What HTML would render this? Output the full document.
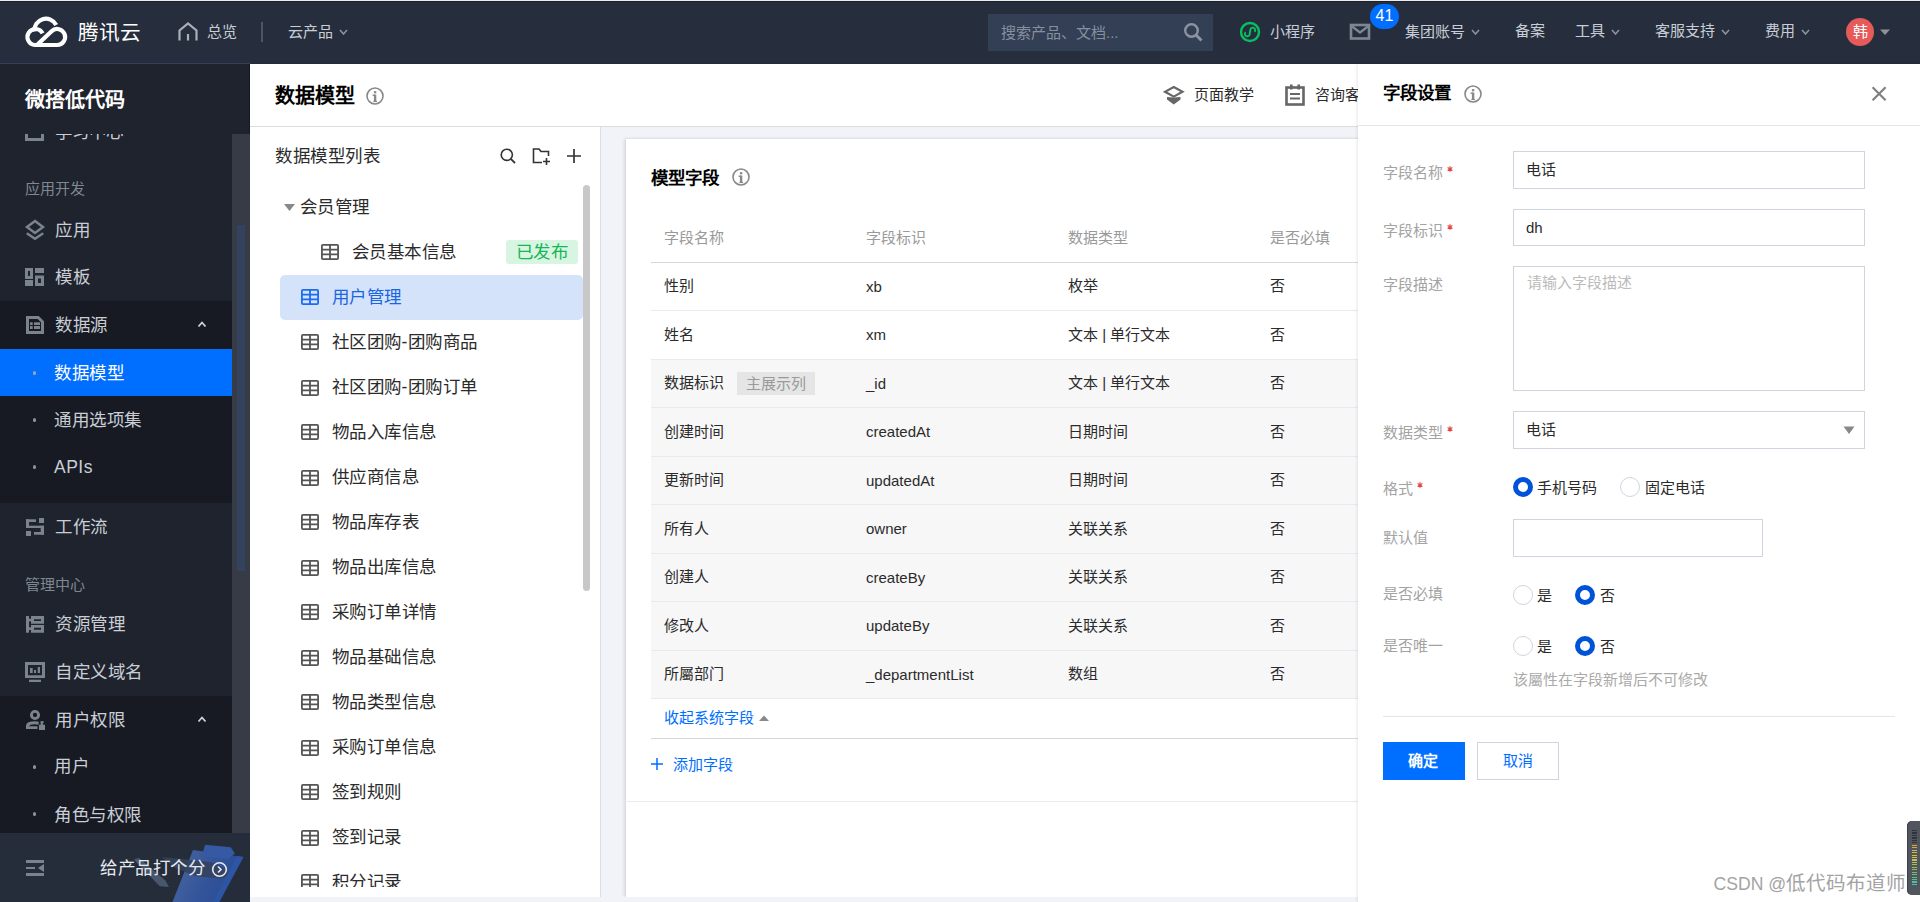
<!DOCTYPE html>
<html lang="zh-CN"><head><meta charset="utf-8"><title>数据模型</title>
<style>
html,body{margin:0;padding:0}
body{width:1920px;height:902px;overflow:hidden;position:relative;background:#fff;font-family:"Liberation Sans",sans-serif}
.t{position:absolute;white-space:nowrap}
.r{position:absolute}
</style></head><body>
<div class="r" style="left:0px;top:0px;width:1920px;height:64px;background:#262e3d;"></div>
<div class="r" style="left:0px;top:0px;width:1920px;height:1px;background:#ececec;"></div>
<div class="r" style="left:0px;top:1px;width:1920px;height:1px;background:#1b2130;"></div>
<div class="r" style="left:0px;top:63px;width:250px;height:1px;background:#33405a;"></div>
<div class="r" style="left:250px;top:63px;width:1670px;height:1px;background:#222c3f;"></div>
<svg class="r" style="left:20px;top:12px;" width="52" height="40" viewBox="0 0 52 40"><g fill="none" stroke="#fff" stroke-width="4.2" stroke-linecap="butt" stroke-linejoin="round"><path d="M22.6 21.4 A8 8 0 1 0 15 33 L37 33 A8 8 0 1 0 31.6 19.2 L17.5 32.6"/><path d="M14.4 19.5 A11.6 11.6 0 0 1 36.2 12.9"/></g></svg>
<div class="t" style="left:78px;top:23.0px;font-size:20.6px;line-height:20px;color:#fff;font-weight:500;letter-spacing:0px">腾讯云</div>
<svg class="r" style="left:177px;top:21px;" width="22" height="21" viewBox="0 0 22 21"><path d="M2.5 19.5 V9.5 L11 2.5 L19.5 9.5 V19.5" fill="none" stroke="#a9b0b8" stroke-width="2.2"/><path d="M11 13 V19.5" stroke="#a9b0b8" stroke-width="2.2"/></svg>
<div class="t" style="left:207px;top:21.5px;font-size:15px;line-height:20px;color:#c9ced6;font-weight:normal;">总览</div>
<div class="r" style="left:261px;top:22px;width:2px;height:20px;background:#4b5563;"></div>
<div class="t" style="left:288px;top:21.5px;font-size:15px;line-height:20px;color:#c9ced6;font-weight:normal;">云产品</div>
<svg class="r" style="left:338.5px;top:28.5px;" width="9" height="6" viewBox="0 0 9 6"><path d="M1 1 L4.5 5 L8 1" fill="none" stroke="#8a929c" stroke-width="1.6"/></svg>
<div class="r" style="left:988px;top:14px;width:225px;height:37px;background:#333f55;"></div>
<div class="t" style="left:1001px;top:22.700000000000003px;font-size:15px;line-height:20px;color:#8691a0;font-weight:normal;">搜索产品、文档...</div>
<svg class="r" style="left:1182px;top:21px;" width="22" height="22" viewBox="0 0 22 22"><circle cx="9.5" cy="9.5" r="6.3" fill="none" stroke="#8a949f" stroke-width="2.4"/><path d="M14 14 L19.5 19.5" stroke="#8a949f" stroke-width="3"/></svg>
<svg class="r" style="left:1239px;top:21px;" width="22" height="22" viewBox="0 0 22 22"><circle cx="11" cy="11" r="9" fill="none" stroke="#07c160" stroke-width="2.4"/><path d="M6.6 11.2 A2.4 2.4 0 1 0 10.7 12.6 L11.4 9.2 A2.4 2.4 0 1 1 15.4 10.8" fill="none" stroke="#07c160" stroke-width="1.9"/></svg>
<div class="t" style="left:1270px;top:22.0px;font-size:15px;line-height:20px;color:#c9ced6;font-weight:normal;">小程序</div>
<svg class="r" style="left:1349px;top:23px;" width="22" height="18" viewBox="0 0 22 18"><rect x="2" y="2" width="18" height="13.5" fill="none" stroke="#7d8792" stroke-width="2.6"/><path d="M2.5 3 L11 9.5 L19.5 3" fill="none" stroke="#7d8792" stroke-width="2.4"/></svg>
<div class="r" style="left:1370px;top:4px;width:29px;height:25px;border-radius:13px;background:#006eff;color:#fff;font-size:16px;line-height:24px;text-align:center">41</div>
<div class="t" style="left:1405px;top:22.0px;font-size:15px;line-height:20px;color:#c9ced6;font-weight:normal;">集团账号</div>
<svg class="r" style="left:1470.5px;top:29px;" width="9" height="6" viewBox="0 0 9 6"><path d="M1 1 L4.5 5 L8 1" fill="none" stroke="#8a929c" stroke-width="1.6"/></svg>
<div class="t" style="left:1515px;top:21.0px;font-size:15px;line-height:20px;color:#c9ced6;font-weight:normal;">备案</div>
<div class="t" style="left:1575px;top:21.0px;font-size:15px;line-height:20px;color:#c9ced6;font-weight:normal;">工具</div>
<svg class="r" style="left:1611px;top:29px;" width="9" height="6" viewBox="0 0 9 6"><path d="M1 1 L4.5 5 L8 1" fill="none" stroke="#8a929c" stroke-width="1.6"/></svg>
<div class="t" style="left:1655px;top:21.0px;font-size:15px;line-height:20px;color:#c9ced6;font-weight:normal;">客服支持</div>
<svg class="r" style="left:1720.5px;top:29px;" width="9" height="6" viewBox="0 0 9 6"><path d="M1 1 L4.5 5 L8 1" fill="none" stroke="#8a929c" stroke-width="1.6"/></svg>
<div class="t" style="left:1765px;top:21.0px;font-size:15px;line-height:20px;color:#c9ced6;font-weight:normal;">费用</div>
<svg class="r" style="left:1800.5px;top:29px;" width="9" height="6" viewBox="0 0 9 6"><path d="M1 1 L4.5 5 L8 1" fill="none" stroke="#8a929c" stroke-width="1.6"/></svg>
<div class="r" style="left:1846px;top:18px;width:28px;height:28px;border-radius:50%;background:#e65a5a;color:#fff;font-size:15px;line-height:28px;text-align:center">韩</div>
<svg class="r" style="left:1879px;top:28px;" width="12" height="8" viewBox="0 0 12 8"><path d="M1 1.5 H11 L6 7 Z" fill="#8f9296"/></svg>
<div class="r" style="left:0px;top:64px;width:250px;height:838px;background:#1f232d;"></div>
<div class="r" style="left:249px;top:64px;width:1px;height:70px;background:#141821;"></div>
<div class="r" style="left:0;top:134px;width:232px;height:699px;overflow:hidden">
</div>
<div class="r" style="left:0px;top:301px;width:232px;height:202px;background:#171a22;"></div>
<div class="r" style="left:0px;top:349px;width:232px;height:47px;background:#006eff;"></div>
<div class="r" style="left:0px;top:696px;width:232px;height:137px;background:#171a22;"></div>
<div class="r" style="left:232px;top:134px;width:18px;height:699px;background:#373b45;"></div>
<div class="r" style="left:237px;top:225px;width:8px;height:346px;background:#33425d;"></div>
<div class="t" style="left:25px;top:90.0px;font-size:20px;line-height:20px;color:#fff;font-weight:bold;">微搭低代码</div>
<div class="r" style="left:0;top:134px;width:232px;height:10px;overflow:hidden">
<div class="t" style="left:25px;top:-12px;width:19px;height:19px;box-sizing:border-box;border:3px solid #7b838d"></div>
<div class="t" style="left:55px;top:-12px;font-size:17.5px;line-height:20px;color:#c9ced6">学习中心</div>
</div>
<div class="t" style="left:25px;top:179.3px;font-size:15px;line-height:20px;color:#7f8791;font-weight:normal;">应用开发</div>
<svg class="r" style="left:20px;top:215px;" width="30" height="30" viewBox="0 0 30 30"><path d="M15 6 L23 12 L15 18 L7 12 Z" fill="none" stroke="#7b838d" stroke-width="2.5" stroke-linejoin="miter"/><path d="M6.8 18.3 L15 23.8 L23.2 18.3" fill="none" stroke="#7b838d" stroke-width="2.5"/></svg>
<div class="t" style="left:55px;top:220.3px;font-size:17.5px;line-height:20px;color:#c9ced6;font-weight:normal;letter-spacing:0.5px;">应用</div>
<svg class="r" style="left:25px;top:268px;" width="19" height="18" viewBox="0 0 19 18"><rect x="1.5" y="1.5" width="5" height="8" fill="none" stroke="#7b838d" stroke-width="3"/><rect x="10" y="0" width="9" height="5" fill="#7b838d"/><rect x="0" y="12" width="8" height="6" fill="#7b838d"/><rect x="11.5" y="9" width="6" height="7.5" fill="none" stroke="#7b838d" stroke-width="3"/></svg>
<div class="t" style="left:55px;top:266.8px;font-size:17.5px;line-height:20px;color:#c9ced6;font-weight:normal;letter-spacing:0.5px;">模板</div>
<svg class="r" style="left:20px;top:310px;" width="30" height="30" viewBox="0 0 30 30"><path d="M7.5 7.5 H18.2 L22.5 11.8 V22.5 H7.5 Z" fill="none" stroke="#7b838d" stroke-width="3"/><rect x="10" y="12.3" width="2.7" height="2.7" fill="#7b838d"/><rect x="14" y="12.3" width="6" height="2.7" fill="#7b838d"/><rect x="10" y="16" width="2.7" height="3" fill="#7b838d"/><rect x="14" y="16" width="6" height="3" fill="#7b838d"/></svg>
<div class="t" style="left:55px;top:315.1px;font-size:17.5px;line-height:20px;color:#c9ced6;font-weight:normal;letter-spacing:0.5px;">数据源</div>
<svg class="r" style="left:197px;top:320px;" width="10" height="8" viewBox="0 0 10 8"><path d="M1.5 6.5 L5 2.5 L8.5 6.5" fill="none" stroke="#cfd3d9" stroke-width="1.8"/></svg>
<div class="r" style="left:33px;top:370.5px;width:3px;height:4px;background:#9aa6b8;border-radius:1.5px"></div>
<div class="t" style="left:54px;top:362.6px;font-size:17.5px;line-height:20px;color:#fff;font-weight:normal;letter-spacing:0.5px;">数据模型</div>
<div class="r" style="left:33px;top:417.5px;width:3px;height:4px;background:#8b929c;border-radius:1.5px"></div>
<div class="t" style="left:54px;top:409.8px;font-size:17.5px;line-height:20px;color:#c9ced6;font-weight:normal;letter-spacing:0.5px;">通用选项集</div>
<div class="r" style="left:33px;top:464.5px;width:3px;height:4px;background:#8b929c;border-radius:1.5px"></div>
<div class="t" style="left:54px;top:456.8px;font-size:17.5px;line-height:20px;color:#c9ced6;font-weight:normal;letter-spacing:0.5px;">APIs</div>
<svg class="r" style="left:20px;top:510px;" width="30" height="30" viewBox="0 0 30 30"><rect x="6" y="9.3" width="10" height="2.7" fill="#7b838d"/><rect x="6" y="9.3" width="3" height="8.7" fill="#7b838d"/><rect x="6" y="15.7" width="18" height="2.3" fill="#7b838d"/><rect x="20.7" y="15.7" width="3.3" height="9" fill="#7b838d"/><rect x="14" y="22" width="10" height="2.7" fill="#7b838d"/><rect x="19" y="8" width="5" height="5" fill="#7b838d"/><rect x="6" y="21" width="5" height="5" fill="#7b838d"/></svg>
<div class="t" style="left:55px;top:516.8px;font-size:17.5px;line-height:20px;color:#c9ced6;font-weight:normal;letter-spacing:0.5px;">工作流</div>
<div class="t" style="left:25px;top:574.5px;font-size:15px;line-height:20px;color:#7f8791;font-weight:normal;">管理中心</div>
<svg class="r" style="left:20px;top:612px;" width="30" height="30" viewBox="0 0 30 30"><rect x="6" y="4" width="3" height="16.7" fill="#7b838d"/><rect x="9" y="6.7" width="2" height="2.6" fill="#7b838d"/><rect x="9" y="15.3" width="2" height="2.7" fill="#7b838d"/><path d="M11 4 H24 V11.7 H11 Z M14 7.3 V9 H21 V7.3 Z" fill="#7b838d" fill-rule="evenodd"/><path d="M11 13 H24 V20.7 H11 Z M14 15.7 V17.7 H21 V15.7 Z" fill="#7b838d" fill-rule="evenodd"/></svg>
<div class="t" style="left:55px;top:614.3px;font-size:17.5px;line-height:20px;color:#c9ced6;font-weight:normal;letter-spacing:0.5px;">资源管理</div>
<svg class="r" style="left:20px;top:658px;" width="30" height="30" viewBox="0 0 30 30"><path d="M5 4 H25 V20 H5 Z M8 7 V17.3 H22 V7 Z" fill="#7b838d" fill-rule="evenodd"/><rect x="10" y="10" width="2.7" height="5" fill="#7b838d"/><rect x="14" y="12" width="2" height="3" fill="#7b838d"/><rect x="17.7" y="9" width="2.3" height="6" fill="#7b838d"/><rect x="9" y="21.7" width="12" height="2.3" fill="#7b838d"/></svg>
<div class="t" style="left:55px;top:661.8px;font-size:17.5px;line-height:20px;color:#c9ced6;font-weight:normal;letter-spacing:0.5px;">自定义域名</div>
<svg class="r" style="left:20px;top:705px;" width="30" height="30" viewBox="0 0 30 30"><circle cx="15" cy="10" r="3.6" fill="none" stroke="#7b838d" stroke-width="2.9"/><path d="M6 24 V20.5 Q6.5 16.3 15 16.3 Q17.5 16.3 18.7 16.8 V19.8 Q17 19.3 15 19.3 Q9.5 19.3 9 21.3 H17.5 V24 Z" fill="#7b838d"/><rect x="19" y="19.7" width="6" height="5.3" fill="#7b838d"/><rect x="20.7" y="16.3" width="2.2" height="4" fill="#7b838d"/><rect x="20.7" y="16.3" width="3" height="1.6" fill="#7b838d"/></svg>
<div class="t" style="left:55px;top:709.5999999999999px;font-size:17.5px;line-height:20px;color:#c9ced6;font-weight:normal;letter-spacing:0.5px;">用户权限</div>
<svg class="r" style="left:197px;top:715px;" width="10" height="8" viewBox="0 0 10 8"><path d="M1.5 6.5 L5 2.5 L8.5 6.5" fill="none" stroke="#cfd3d9" stroke-width="1.8"/></svg>
<div class="r" style="left:33px;top:765px;width:3px;height:4px;background:#8b929c;border-radius:1.5px"></div>
<div class="t" style="left:54px;top:756.3px;font-size:17.5px;line-height:20px;color:#c9ced6;font-weight:normal;letter-spacing:0.5px;">用户</div>
<div class="r" style="left:33px;top:812px;width:3px;height:4px;background:#8b929c;border-radius:1.5px"></div>
<div class="t" style="left:54px;top:804.5px;font-size:17.5px;line-height:20px;color:#c9ced6;font-weight:normal;letter-spacing:0.5px;">角色与权限</div>
<div class="r" style="left:0px;top:833px;width:250px;height:69px;background:#252d3b;"></div>
<svg class="r" style="left:125px;top:838px;" width="125" height="64" viewBox="0 0 125 64"><defs><linearGradient id="bd" x1="0" y1="0" x2="1" y2="0.3"><stop offset="0" stop-color="#4a67a0"/><stop offset="0.6" stop-color="#33549a"/><stop offset="1" stop-color="#2a4c92"/></linearGradient></defs><path d="M9.2 21.3 L14.2 19.9 L40.4 42.6 L44 48.9 L34.8 48.2 L10.6 23.4 Z" fill="#48566e"/><path d="M68 12 L118.4 19.1 L94.3 64 L47.5 64 Z" fill="url(#bd)"/><path d="M112 18 L118.4 19.1 L94.3 64 L88 64 Z" fill="#2c55a6"/><path d="M36.9 19.1 L85 24 Q104 30 102.8 35.5 Q101 40.4 96 40.4 L71 38.3 L49.6 29.8 Z" fill="#34425e" opacity="0.9"/><path d="M80.1 6.7 L105.7 9.2 L109.9 15.6 L102.8 21.3 L76.6 18.4 Z" fill="#3659a3"/></svg>
<svg class="r" style="left:20px;top:852px;" width="30" height="30" viewBox="0 0 30 30"><rect x="6" y="8" width="18" height="3" fill="#7b838d"/><rect x="6" y="15" width="9" height="2" fill="#7b838d"/><path d="M24 12 V20 L18 16 Z" fill="#7b838d"/><rect x="6" y="21" width="18" height="3" fill="#7b838d"/></svg>
<div class="t" style="left:100px;top:857.8px;font-size:17.5px;line-height:20px;color:#e6e9ee;font-weight:normal;letter-spacing:0.5px;">给产品打个分</div>
<svg class="r" style="left:211px;top:861px;" width="17" height="17" viewBox="0 0 17 17"><circle cx="8.5" cy="8.5" r="6.8" fill="none" stroke="#e6e9ee" stroke-width="1.6"/><path d="M7 5.5 L10 8.5 L7 11.5" fill="none" stroke="#e6e9ee" stroke-width="1.6"/></svg>
<div class="r" style="left:250px;top:64px;width:1108px;height:62px;background:#fff;"></div>
<div class="r" style="left:250px;top:126px;width:1108px;height:1px;background:#dcdcdc;"></div>
<div class="t" style="left:275px;top:86.0px;font-size:20px;line-height:20px;color:#000;font-weight:bold;">数据模型</div>
<svg class="r" style="left:366px;top:87px;" width="18" height="18" viewBox="0 0 18 18"><circle cx="9.0" cy="9.0" r="8.0" fill="none" stroke="#888" stroke-width="1.6"/><rect x="7.9" y="7.56" width="2.4" height="6.66" fill="#888"/><rect x="7.9" y="4.140000000000001" width="2.4" height="2.2" fill="#888"/><rect x="6.6" y="7.56" width="2.4" height="1.4" fill="#888"/><rect x="7.4" y="13.86" width="3.6" height="1.2" fill="#888"/></svg>
<svg class="r" style="left:1163px;top:85px;" width="22" height="20" viewBox="0 0 22 20"><path d="M10.75 2 L19.5 6.8 L10.75 11.6 L2 6.8 Z" fill="none" stroke="#666" stroke-width="2.2"/><path d="M4 12 L10.75 12.6 L17.5 12 V14.6 L10.75 19.4 L4 14.6 Z" fill="#666"/></svg>
<div class="t" style="left:1194px;top:84.5px;font-size:15px;line-height:20px;color:#2b2b2b;font-weight:normal;">页面教学</div>
<svg class="r" style="left:1285px;top:84px;" width="20" height="22" viewBox="0 0 20 22"><rect x="1.5" y="3.5" width="17" height="17" fill="none" stroke="#666" stroke-width="2.6"/><rect x="5" y="0.5" width="2.6" height="5" fill="#666"/><rect x="12.4" y="0.5" width="2.6" height="5" fill="#666"/><rect x="5" y="9" width="10" height="2" fill="#666"/><rect x="5" y="13.5" width="10" height="2" fill="#666"/></svg>
<div class="t" style="left:1315px;top:84.5px;font-size:15px;line-height:20px;color:#2b2b2b;font-weight:normal;">咨询客服</div>
<div class="r" style="left:250px;top:127px;width:350px;height:770px;background:#fff;"></div>
<div class="r" style="left:600px;top:127px;width:1px;height:770px;background:#d8dde6;"></div>
<div class="r" style="left:250px;top:897px;width:351px;height:5px;background:#f2f3f7;"></div>
<div class="t" style="left:275px;top:146.3px;font-size:17.5px;line-height:20px;color:#2b2b2b;font-weight:normal;letter-spacing:0.5px;">数据模型列表</div>
<svg class="r" style="left:499px;top:147px;" width="18" height="18" viewBox="0 0 18 18"><circle cx="7.8" cy="7.8" r="5.6" fill="none" stroke="#333" stroke-width="1.6"/><path d="M11.8 11.8 L16 16" stroke="#333" stroke-width="1.8"/></svg>
<svg class="r" style="left:532px;top:147px;" width="19" height="19" viewBox="0 0 19 19"><path d="M10 15.5 H1.5 V2 H7 L9 4.5 H16.5 V9" fill="none" stroke="#333" stroke-width="1.6"/><path d="M14.5 11 V18 M11 14.5 H18" stroke="#333" stroke-width="1.6"/></svg>
<svg class="r" style="left:566px;top:148px;" width="16" height="16" viewBox="0 0 16 16"><path d="M8 1 V15 M1 8 H15" stroke="#333" stroke-width="1.7"/></svg>
<div class="r" style="left:250px;top:185px;width:350px;height:702px;overflow:hidden">
<svg class="r" style="left:34px;top:19px" width="11" height="7"><path d="M0 0 H11 L5.5 7 Z" fill="#888"/></svg>
<div class="t" style="left:50px;top:11.800000000000011px;font-size:17.5px;line-height:20px;color:#2b2b2b;letter-spacing:0.4px">会员管理</div>
<svg class="r" style="left:71px;top:59px" width="18" height="16" viewBox="0 0 18 16"><rect x="0.9" y="0.9" width="16.2" height="14.2" rx="1" fill="none" stroke="#555" stroke-width="1.8"/><path d="M1 5.6 H17 M1 10.4 H17 M9 1 V15" stroke="#555" stroke-width="1.8"/></svg>
<div class="t" style="left:102px;top:57.099999999999994px;font-size:17.5px;line-height:20px;color:#2b2b2b;letter-spacing:0.4px">会员基本信息</div>
<div class="r" style="left:256px;top:55px;width:72px;height:24px;border-radius:3px;background:#d8f5e2"></div>
<div class="t" style="left:266px;top:57.30000000000001px;font-size:17.5px;line-height:20px;color:#16b556;letter-spacing:0.4px">已发布</div>
<div class="r" style="left:30px;top:90px;width:303px;height:45px;border-radius:5px;background:#d5e3fa"></div>
<svg class="r" style="left:51px;top:104px" width="18" height="16" viewBox="0 0 18 16"><rect x="0.9" y="0.9" width="16.2" height="14.2" rx="1" fill="none" stroke="#1d6bef" stroke-width="1.8"/><path d="M1 5.6 H17 M1 10.4 H17 M9 1 V15" stroke="#1d6bef" stroke-width="1.8"/></svg>
<div class="t" style="left:82px;top:102.0px;font-size:17.5px;line-height:20px;color:#1a66e0;letter-spacing:0.4px">用户管理</div>
<svg class="r" style="left:51px;top:149px" width="18" height="16" viewBox="0 0 18 16"><rect x="0.9" y="0.9" width="16.2" height="14.2" rx="1" fill="none" stroke="#555" stroke-width="1.8"/><path d="M1 5.6 H17 M1 10.4 H17 M9 1 V15" stroke="#555" stroke-width="1.8"/></svg>
<div class="t" style="left:82px;top:147.3px;font-size:17.5px;line-height:20px;color:#2b2b2b;letter-spacing:0.4px">社区团购-团购商品</div>
<svg class="r" style="left:51px;top:195px" width="18" height="16" viewBox="0 0 18 16"><rect x="0.9" y="0.9" width="16.2" height="14.2" rx="1" fill="none" stroke="#555" stroke-width="1.8"/><path d="M1 5.6 H17 M1 10.4 H17 M9 1 V15" stroke="#555" stroke-width="1.8"/></svg>
<div class="t" style="left:82px;top:192.3px;font-size:17.5px;line-height:20px;color:#2b2b2b;letter-spacing:0.4px">社区团购-团购订单</div>
<svg class="r" style="left:51px;top:239px" width="18" height="16" viewBox="0 0 18 16"><rect x="0.9" y="0.9" width="16.2" height="14.2" rx="1" fill="none" stroke="#555" stroke-width="1.8"/><path d="M1 5.6 H17 M1 10.4 H17 M9 1 V15" stroke="#555" stroke-width="1.8"/></svg>
<div class="t" style="left:82px;top:237.3px;font-size:17.5px;line-height:20px;color:#2b2b2b;letter-spacing:0.4px">物品入库信息</div>
<svg class="r" style="left:51px;top:285px" width="18" height="16" viewBox="0 0 18 16"><rect x="0.9" y="0.9" width="16.2" height="14.2" rx="1" fill="none" stroke="#555" stroke-width="1.8"/><path d="M1 5.6 H17 M1 10.4 H17 M9 1 V15" stroke="#555" stroke-width="1.8"/></svg>
<div class="t" style="left:82px;top:282.3px;font-size:17.5px;line-height:20px;color:#2b2b2b;letter-spacing:0.4px">供应商信息</div>
<svg class="r" style="left:51px;top:329px" width="18" height="16" viewBox="0 0 18 16"><rect x="0.9" y="0.9" width="16.2" height="14.2" rx="1" fill="none" stroke="#555" stroke-width="1.8"/><path d="M1 5.6 H17 M1 10.4 H17 M9 1 V15" stroke="#555" stroke-width="1.8"/></svg>
<div class="t" style="left:82px;top:327.29999999999995px;font-size:17.5px;line-height:20px;color:#2b2b2b;letter-spacing:0.4px">物品库存表</div>
<svg class="r" style="left:51px;top:375px" width="18" height="16" viewBox="0 0 18 16"><rect x="0.9" y="0.9" width="16.2" height="14.2" rx="1" fill="none" stroke="#555" stroke-width="1.8"/><path d="M1 5.6 H17 M1 10.4 H17 M9 1 V15" stroke="#555" stroke-width="1.8"/></svg>
<div class="t" style="left:82px;top:372.29999999999995px;font-size:17.5px;line-height:20px;color:#2b2b2b;letter-spacing:0.4px">物品出库信息</div>
<svg class="r" style="left:51px;top:419px" width="18" height="16" viewBox="0 0 18 16"><rect x="0.9" y="0.9" width="16.2" height="14.2" rx="1" fill="none" stroke="#555" stroke-width="1.8"/><path d="M1 5.6 H17 M1 10.4 H17 M9 1 V15" stroke="#555" stroke-width="1.8"/></svg>
<div class="t" style="left:82px;top:417.29999999999995px;font-size:17.5px;line-height:20px;color:#2b2b2b;letter-spacing:0.4px">采购订单详情</div>
<svg class="r" style="left:51px;top:465px" width="18" height="16" viewBox="0 0 18 16"><rect x="0.9" y="0.9" width="16.2" height="14.2" rx="1" fill="none" stroke="#555" stroke-width="1.8"/><path d="M1 5.6 H17 M1 10.4 H17 M9 1 V15" stroke="#555" stroke-width="1.8"/></svg>
<div class="t" style="left:82px;top:462.29999999999995px;font-size:17.5px;line-height:20px;color:#2b2b2b;letter-spacing:0.4px">物品基础信息</div>
<svg class="r" style="left:51px;top:509px" width="18" height="16" viewBox="0 0 18 16"><rect x="0.9" y="0.9" width="16.2" height="14.2" rx="1" fill="none" stroke="#555" stroke-width="1.8"/><path d="M1 5.6 H17 M1 10.4 H17 M9 1 V15" stroke="#555" stroke-width="1.8"/></svg>
<div class="t" style="left:82px;top:507.29999999999995px;font-size:17.5px;line-height:20px;color:#2b2b2b;letter-spacing:0.4px">物品类型信息</div>
<svg class="r" style="left:51px;top:555px" width="18" height="16" viewBox="0 0 18 16"><rect x="0.9" y="0.9" width="16.2" height="14.2" rx="1" fill="none" stroke="#555" stroke-width="1.8"/><path d="M1 5.6 H17 M1 10.4 H17 M9 1 V15" stroke="#555" stroke-width="1.8"/></svg>
<div class="t" style="left:82px;top:552.3px;font-size:17.5px;line-height:20px;color:#2b2b2b;letter-spacing:0.4px">采购订单信息</div>
<svg class="r" style="left:51px;top:599px" width="18" height="16" viewBox="0 0 18 16"><rect x="0.9" y="0.9" width="16.2" height="14.2" rx="1" fill="none" stroke="#555" stroke-width="1.8"/><path d="M1 5.6 H17 M1 10.4 H17 M9 1 V15" stroke="#555" stroke-width="1.8"/></svg>
<div class="t" style="left:82px;top:597.3px;font-size:17.5px;line-height:20px;color:#2b2b2b;letter-spacing:0.4px">签到规则</div>
<svg class="r" style="left:51px;top:645px" width="18" height="16" viewBox="0 0 18 16"><rect x="0.9" y="0.9" width="16.2" height="14.2" rx="1" fill="none" stroke="#555" stroke-width="1.8"/><path d="M1 5.6 H17 M1 10.4 H17 M9 1 V15" stroke="#555" stroke-width="1.8"/></svg>
<div class="t" style="left:82px;top:642.3px;font-size:17.5px;line-height:20px;color:#2b2b2b;letter-spacing:0.4px">签到记录</div>
<svg class="r" style="left:51px;top:689px" width="18" height="16" viewBox="0 0 18 16"><rect x="0.9" y="0.9" width="16.2" height="14.2" rx="1" fill="none" stroke="#555" stroke-width="1.8"/><path d="M1 5.6 H17 M1 10.4 H17 M9 1 V15" stroke="#555" stroke-width="1.8"/></svg>
<div class="t" style="left:82px;top:687.3px;font-size:17.5px;line-height:20px;color:#2b2b2b;letter-spacing:0.4px">积分记录</div>
</div>
<div class="r" style="left:583px;top:185px;width:7px;height:406px;background:#c8c8c8;border-radius:4px"></div>
<div class="r" style="left:601px;top:127px;width:757px;height:775px;background:#f2f3f8;"></div>
<div class="r" style="left:626px;top:139px;width:760px;height:758px;background:#fff;box-shadow:-2px 0 3px rgba(30,40,60,0.12),0 -1px 2px rgba(30,40,60,0.04)"></div>
<div class="r" style="left:601px;top:897px;width:757px;height:5px;background:#f2f3f8;"></div>
<div class="t" style="left:651px;top:168.3px;font-size:17.5px;line-height:20px;color:#000;font-weight:bold;">模型字段</div>
<svg class="r" style="left:732px;top:168px;" width="18" height="18" viewBox="0 0 18 18"><circle cx="9.0" cy="9.0" r="8.0" fill="none" stroke="#888" stroke-width="1.6"/><rect x="7.9" y="7.56" width="2.4" height="6.66" fill="#888"/><rect x="7.9" y="4.140000000000001" width="2.4" height="2.2" fill="#888"/><rect x="6.6" y="7.56" width="2.4" height="1.4" fill="#888"/><rect x="7.4" y="13.86" width="3.6" height="1.2" fill="#888"/></svg>
<div class="t" style="left:664px;top:227.5px;font-size:15px;line-height:20px;color:#999;font-weight:normal;">字段名称</div>
<div class="t" style="left:866px;top:227.5px;font-size:15px;line-height:20px;color:#999;font-weight:normal;">字段标识</div>
<div class="t" style="left:1068px;top:227.5px;font-size:15px;line-height:20px;color:#999;font-weight:normal;">数据类型</div>
<div class="t" style="left:1270px;top:227.5px;font-size:15px;line-height:20px;color:#999;font-weight:normal;">是否必填</div>
<div class="r" style="left:651px;top:262px;width:707px;height:1px;background:#d4d9e1;"></div>
<div class="r" style="left:651px;top:310px;width:707px;height:1px;background:#e7eaef;"></div>
<div class="t" style="left:664px;top:276.0px;font-size:15px;line-height:20px;color:#2b2b2b;font-weight:normal;">性别</div>
<div class="t" style="left:866px;top:276.5px;font-size:15px;line-height:20px;color:#2b2b2b;font-weight:normal;">xb</div>
<div class="t" style="left:1068px;top:276.0px;font-size:15px;line-height:20px;color:#2b2b2b;font-weight:normal;">枚举</div>
<div class="t" style="left:1270px;top:276.0px;font-size:15px;line-height:20px;color:#2b2b2b;font-weight:normal;">否</div>
<div class="r" style="left:651px;top:359px;width:707px;height:1px;background:#e7eaef;"></div>
<div class="t" style="left:664px;top:324.5px;font-size:15px;line-height:20px;color:#2b2b2b;font-weight:normal;">姓名</div>
<div class="t" style="left:866px;top:325.0px;font-size:15px;line-height:20px;color:#2b2b2b;font-weight:normal;">xm</div>
<div class="t" style="left:1068px;top:324.5px;font-size:15px;line-height:20px;color:#2b2b2b;font-weight:normal;">文本 | 单行文本</div>
<div class="t" style="left:1270px;top:324.5px;font-size:15px;line-height:20px;color:#2b2b2b;font-weight:normal;">否</div>
<div class="r" style="left:651px;top:360px;width:707px;height:47px;background:#f7f7f8;"></div>
<div class="r" style="left:651px;top:407px;width:707px;height:1px;background:#e7eaef;"></div>
<div class="t" style="left:664px;top:373.0px;font-size:15px;line-height:20px;color:#2b2b2b;font-weight:normal;">数据标识</div>
<div class="t" style="left:866px;top:373.5px;font-size:15px;line-height:20px;color:#2b2b2b;font-weight:normal;">_id</div>
<div class="t" style="left:1068px;top:373.0px;font-size:15px;line-height:20px;color:#2b2b2b;font-weight:normal;">文本 | 单行文本</div>
<div class="t" style="left:1270px;top:373.0px;font-size:15px;line-height:20px;color:#2b2b2b;font-weight:normal;">否</div>
<div class="r" style="left:651px;top:408px;width:707px;height:48px;background:#f7f7f8;"></div>
<div class="r" style="left:651px;top:456px;width:707px;height:1px;background:#e7eaef;"></div>
<div class="t" style="left:664px;top:421.5px;font-size:15px;line-height:20px;color:#2b2b2b;font-weight:normal;">创建时间</div>
<div class="t" style="left:866px;top:422.0px;font-size:15px;line-height:20px;color:#2b2b2b;font-weight:normal;">createdAt</div>
<div class="t" style="left:1068px;top:421.5px;font-size:15px;line-height:20px;color:#2b2b2b;font-weight:normal;">日期时间</div>
<div class="t" style="left:1270px;top:421.5px;font-size:15px;line-height:20px;color:#2b2b2b;font-weight:normal;">否</div>
<div class="r" style="left:651px;top:457px;width:707px;height:47px;background:#f7f7f8;"></div>
<div class="r" style="left:651px;top:504px;width:707px;height:1px;background:#e7eaef;"></div>
<div class="t" style="left:664px;top:470.0px;font-size:15px;line-height:20px;color:#2b2b2b;font-weight:normal;">更新时间</div>
<div class="t" style="left:866px;top:470.5px;font-size:15px;line-height:20px;color:#2b2b2b;font-weight:normal;">updatedAt</div>
<div class="t" style="left:1068px;top:470.0px;font-size:15px;line-height:20px;color:#2b2b2b;font-weight:normal;">日期时间</div>
<div class="t" style="left:1270px;top:470.0px;font-size:15px;line-height:20px;color:#2b2b2b;font-weight:normal;">否</div>
<div class="r" style="left:651px;top:505px;width:707px;height:48px;background:#f7f7f8;"></div>
<div class="r" style="left:651px;top:553px;width:707px;height:1px;background:#e7eaef;"></div>
<div class="t" style="left:664px;top:518.5px;font-size:15px;line-height:20px;color:#2b2b2b;font-weight:normal;">所有人</div>
<div class="t" style="left:866px;top:519.0px;font-size:15px;line-height:20px;color:#2b2b2b;font-weight:normal;">owner</div>
<div class="t" style="left:1068px;top:518.5px;font-size:15px;line-height:20px;color:#2b2b2b;font-weight:normal;">关联关系</div>
<div class="t" style="left:1270px;top:518.5px;font-size:15px;line-height:20px;color:#2b2b2b;font-weight:normal;">否</div>
<div class="r" style="left:651px;top:554px;width:707px;height:47px;background:#f7f7f8;"></div>
<div class="r" style="left:651px;top:601px;width:707px;height:1px;background:#e7eaef;"></div>
<div class="t" style="left:664px;top:567.0px;font-size:15px;line-height:20px;color:#2b2b2b;font-weight:normal;">创建人</div>
<div class="t" style="left:866px;top:567.5px;font-size:15px;line-height:20px;color:#2b2b2b;font-weight:normal;">createBy</div>
<div class="t" style="left:1068px;top:567.0px;font-size:15px;line-height:20px;color:#2b2b2b;font-weight:normal;">关联关系</div>
<div class="t" style="left:1270px;top:567.0px;font-size:15px;line-height:20px;color:#2b2b2b;font-weight:normal;">否</div>
<div class="r" style="left:651px;top:602px;width:707px;height:48px;background:#f7f7f8;"></div>
<div class="r" style="left:651px;top:650px;width:707px;height:1px;background:#e7eaef;"></div>
<div class="t" style="left:664px;top:615.5px;font-size:15px;line-height:20px;color:#2b2b2b;font-weight:normal;">修改人</div>
<div class="t" style="left:866px;top:616.0px;font-size:15px;line-height:20px;color:#2b2b2b;font-weight:normal;">updateBy</div>
<div class="t" style="left:1068px;top:615.5px;font-size:15px;line-height:20px;color:#2b2b2b;font-weight:normal;">关联关系</div>
<div class="t" style="left:1270px;top:615.5px;font-size:15px;line-height:20px;color:#2b2b2b;font-weight:normal;">否</div>
<div class="r" style="left:651px;top:651px;width:707px;height:47px;background:#f7f7f8;"></div>
<div class="r" style="left:651px;top:698px;width:707px;height:1px;background:#e7eaef;"></div>
<div class="t" style="left:664px;top:664.0px;font-size:15px;line-height:20px;color:#2b2b2b;font-weight:normal;">所屬部门</div>
<div class="t" style="left:866px;top:664.5px;font-size:15px;line-height:20px;color:#2b2b2b;font-weight:normal;">_departmentList</div>
<div class="t" style="left:1068px;top:664.0px;font-size:15px;line-height:20px;color:#2b2b2b;font-weight:normal;">数组</div>
<div class="t" style="left:1270px;top:664.0px;font-size:15px;line-height:20px;color:#2b2b2b;font-weight:normal;">否</div>
<div class="r" style="left:737px;top:372px;width:78px;height:23px;background:#e5e5e5;"></div>
<div class="t" style="left:746px;top:373.5px;font-size:15px;line-height:20px;color:#999;font-weight:normal;">主展示列</div>
<div class="t" style="left:664px;top:708.3px;font-size:15px;line-height:20px;color:#006eff;font-weight:normal;">收起系统字段</div>
<svg class="r" style="left:758px;top:714px;" width="12" height="8" viewBox="0 0 12 8"><path d="M1 7 H11 L6 1.5 Z" fill="#888"/></svg>
<div class="r" style="left:651px;top:738px;width:707px;height:1px;background:#d4d9e1;"></div>
<svg class="r" style="left:651px;top:758px;" width="12" height="12" viewBox="0 0 12 12"><path d="M6 0 V12 M0 6 H12" stroke="#006eff" stroke-width="1.5"/></svg>
<div class="t" style="left:673px;top:754.5px;font-size:15px;line-height:20px;color:#006eff;font-weight:normal;">添加字段</div>
<div class="r" style="left:625px;top:801px;width:733px;height:1px;background:#e7eaef;"></div>
<div class="r" style="left:1358px;top:64px;width:562px;height:838px;background:#fff;box-shadow:-1px 0 3px rgba(30,40,60,0.10)"></div>
<div class="r" style="left:1358px;top:125px;width:562px;height:1px;background:#e3e6ec;"></div>
<div class="t" style="left:1383px;top:83.3px;font-size:17.5px;line-height:20px;color:#000;font-weight:bold;">字段设置</div>
<svg class="r" style="left:1464px;top:85px;" width="18" height="18" viewBox="0 0 18 18"><circle cx="9.0" cy="9.0" r="8.0" fill="none" stroke="#888" stroke-width="1.6"/><rect x="7.9" y="7.56" width="2.4" height="6.66" fill="#888"/><rect x="7.9" y="4.140000000000001" width="2.4" height="2.2" fill="#888"/><rect x="6.6" y="7.56" width="2.4" height="1.4" fill="#888"/><rect x="7.4" y="13.86" width="3.6" height="1.2" fill="#888"/></svg>
<svg class="r" style="left:1870px;top:85px;" width="18" height="18" viewBox="0 0 18 18"><path d="M2.6 2.2 L15.6 15.2 M15.6 2.2 L2.6 15.2" stroke="#808080" stroke-width="2.2"/></svg>
<svg class="r" style="left:1447px;top:166px;" width="6" height="6" viewBox="0 0 6 6"><path d="M3 0.3 V5.7 M0.6 1.6 L5.4 4.4 M0.6 4.4 L5.4 1.6" stroke="#e54545" stroke-width="1.2"/></svg>
<svg class="r" style="left:1447px;top:224px;" width="6" height="6" viewBox="0 0 6 6"><path d="M3 0.3 V5.7 M0.6 1.6 L5.4 4.4 M0.6 4.4 L5.4 1.6" stroke="#e54545" stroke-width="1.2"/></svg>
<svg class="r" style="left:1447px;top:426px;" width="6" height="6" viewBox="0 0 6 6"><path d="M3 0.3 V5.7 M0.6 1.6 L5.4 4.4 M0.6 4.4 L5.4 1.6" stroke="#e54545" stroke-width="1.2"/></svg>
<svg class="r" style="left:1417px;top:482px;" width="6" height="6" viewBox="0 0 6 6"><path d="M3 0.3 V5.7 M0.6 1.6 L5.4 4.4 M0.6 4.4 L5.4 1.6" stroke="#e54545" stroke-width="1.2"/></svg>
<div class="t" style="left:1383px;top:163.0px;font-size:15px;line-height:20px;color:#a3a3a3;font-weight:normal;">字段名称</div>
<div class="r" style="left:1513px;top:151px;width:352px;height:38px;box-sizing:border-box;border:1px solid #cfd5de;background:#fff"></div>
<div class="t" style="left:1526px;top:160.0px;font-size:15px;line-height:20px;color:#2b2b2b;font-weight:normal;">电话</div>
<div class="t" style="left:1383px;top:220.5px;font-size:15px;line-height:20px;color:#a3a3a3;font-weight:normal;">字段标识</div>
<div class="r" style="left:1513px;top:209px;width:352px;height:37px;box-sizing:border-box;border:1px solid #cfd5de;background:#fff"></div>
<div class="t" style="left:1526px;top:218.0px;font-size:15px;line-height:20px;color:#2b2b2b;font-weight:normal;">dh</div>
<div class="t" style="left:1383px;top:274.5px;font-size:15px;line-height:20px;color:#a3a3a3;font-weight:normal;">字段描述</div>
<div class="r" style="left:1513px;top:266px;width:352px;height:125px;box-sizing:border-box;border:1px solid #cfd5de;background:#fff"></div>
<div class="t" style="left:1527px;top:273.0px;font-size:15px;line-height:20px;color:#bbb;font-weight:normal;">请输入字段描述</div>
<div class="t" style="left:1383px;top:422.5px;font-size:15px;line-height:20px;color:#a3a3a3;font-weight:normal;">数据类型</div>
<div class="r" style="left:1513px;top:411px;width:352px;height:38px;box-sizing:border-box;border:1px solid #cfd5de;background:#fff"></div>
<div class="t" style="left:1526px;top:420.0px;font-size:15px;line-height:20px;color:#2b2b2b;font-weight:normal;">电话</div>
<svg class="r" style="left:1843px;top:426px;" width="12" height="9" viewBox="0 0 12 9"><path d="M0.5 0.5 H11.5 L6 8 Z" fill="#888"/></svg>
<div class="t" style="left:1383px;top:479.0px;font-size:15px;line-height:20px;color:#a3a3a3;font-weight:normal;">格式</div>
<div class="r" style="left:1513px;top:477px;width:20px;height:20px;box-sizing:border-box;border-radius:50%;border:5px solid #0052d9;background:#fff"></div>
<div class="t" style="left:1537px;top:477.5px;font-size:15px;line-height:20px;color:#2b2b2b;font-weight:normal;">手机号码</div>
<div class="r" style="left:1620px;top:477px;width:20px;height:20px;box-sizing:border-box;border-radius:50%;border:1px solid #cfd5de;background:#fff"></div>
<div class="t" style="left:1645px;top:477.5px;font-size:15px;line-height:20px;color:#2b2b2b;font-weight:normal;">固定电话</div>
<div class="t" style="left:1383px;top:527.5px;font-size:15px;line-height:20px;color:#a3a3a3;font-weight:normal;">默认值</div>
<div class="r" style="left:1513px;top:519px;width:250px;height:38px;box-sizing:border-box;border:1px solid #cfd5de;background:#fff"></div>
<div class="t" style="left:1383px;top:584.0px;font-size:15px;line-height:20px;color:#a3a3a3;font-weight:normal;">是否必填</div>
<div class="r" style="left:1513px;top:585px;width:20px;height:20px;box-sizing:border-box;border-radius:50%;border:1px solid #cfd5de;background:#fff"></div>
<div class="t" style="left:1537px;top:585.5px;font-size:15px;line-height:20px;color:#2b2b2b;font-weight:normal;">是</div>
<div class="r" style="left:1575px;top:585px;width:20px;height:20px;box-sizing:border-box;border-radius:50%;border:5px solid #0052d9;background:#fff"></div>
<div class="t" style="left:1600px;top:585.5px;font-size:15px;line-height:20px;color:#2b2b2b;font-weight:normal;">否</div>
<div class="t" style="left:1383px;top:635.5px;font-size:15px;line-height:20px;color:#a3a3a3;font-weight:normal;">是否唯一</div>
<div class="r" style="left:1513px;top:636px;width:20px;height:20px;box-sizing:border-box;border-radius:50%;border:1px solid #cfd5de;background:#fff"></div>
<div class="t" style="left:1537px;top:636.5px;font-size:15px;line-height:20px;color:#2b2b2b;font-weight:normal;">是</div>
<div class="r" style="left:1575px;top:636px;width:20px;height:20px;box-sizing:border-box;border-radius:50%;border:5px solid #0052d9;background:#fff"></div>
<div class="t" style="left:1600px;top:636.5px;font-size:15px;line-height:20px;color:#2b2b2b;font-weight:normal;">否</div>
<div class="t" style="left:1513px;top:669.5px;font-size:15px;line-height:20px;color:#aaa;font-weight:normal;">该屬性在字段新增后不可修改</div>
<div class="r" style="left:1383px;top:716px;width:512px;height:1px;background:#e3e6ec;"></div>
<div class="r" style="left:1383px;top:742px;width:82px;height:38px;background:#006eff"></div>
<div class="t" style="left:1408px;top:751.0px;font-size:15px;line-height:20px;color:#fff;font-weight:bold;">确定</div>
<div class="r" style="left:1477px;top:742px;width:82px;height:38px;box-sizing:border-box;border:1px solid #cfd5de;background:#fff"></div>
<div class="t" style="left:1503px;top:751.0px;font-size:15px;line-height:20px;color:#006eff;font-weight:normal;">取消</div>
<div class="t" style="left:1713.5px;top:873px;line-height:20px;color:#a3a3a3;text-shadow:0 0 1px #fff"><span style="font-size:17.6px">CSDN @</span><span style="font-size:19.5px">低代码布道师</span></div>
<div class="r" style="left:1907px;top:821px;width:14px;height:74px;background:#51565e;border-radius:5px 0 0 5px;box-shadow:inset 1px 0 0 #3a3e45"></div>
<div class="r" style="left:1912px;top:830.0px;width:5px;height:1.2px;background:#30343a;"></div>
<div class="r" style="left:1912px;top:832.45px;width:5px;height:1.2px;background:#30343a;"></div>
<div class="r" style="left:1912px;top:834.9px;width:5px;height:1.2px;background:#30343a;"></div>
<div class="r" style="left:1912px;top:837.35px;width:5px;height:1.2px;background:#30343a;"></div>
<div class="r" style="left:1912px;top:839.8px;width:5px;height:1.2px;background:#30343a;"></div>
<div class="r" style="left:1912px;top:842.25px;width:5px;height:1.2px;background:#30343a;"></div>
<div class="r" style="left:1912px;top:844.7px;width:5px;height:1.2px;background:#e0a03c;"></div>
<div class="r" style="left:1912px;top:847.15px;width:5px;height:1.2px;background:#dda73c;"></div>
<div class="r" style="left:1912px;top:849.6px;width:5px;height:1.2px;background:#dbaf3d;"></div>
<div class="r" style="left:1912px;top:852.05px;width:5px;height:1.2px;background:#d9b63e;"></div>
<div class="r" style="left:1912px;top:854.5px;width:5px;height:1.2px;background:#d7be3f;"></div>
<div class="r" style="left:1912px;top:856.95px;width:5px;height:1.2px;background:#d3c340;"></div>
<div class="r" style="left:1912px;top:859.4px;width:5px;height:1.2px;background:#c4c245;"></div>
<div class="r" style="left:1912px;top:861.85px;width:5px;height:1.2px;background:#b5c14a;"></div>
<div class="r" style="left:1912px;top:864.3px;width:5px;height:1.2px;background:#a6c04e;"></div>
<div class="r" style="left:1912px;top:866.75px;width:5px;height:1.2px;background:#97bf53;"></div>
<div class="r" style="left:1912px;top:869.2px;width:5px;height:1.2px;background:#88be58;"></div>
<div class="r" style="left:1912px;top:871.65px;width:5px;height:1.2px;background:#7abe62;"></div>
<div class="r" style="left:1912px;top:874.1px;width:5px;height:1.2px;background:#6fbf70;"></div>
<div class="r" style="left:1912px;top:876.55px;width:5px;height:1.2px;background:#63c07f;"></div>
<div class="r" style="left:1912px;top:879.0px;width:5px;height:1.2px;background:#57c18d;"></div>
<div class="r" style="left:1912px;top:881.45px;width:5px;height:1.2px;background:#4bc29b;"></div>
<div class="r" style="left:1912px;top:883.9px;width:5px;height:1.2px;background:#40c4aa;"></div>
</body></html>
